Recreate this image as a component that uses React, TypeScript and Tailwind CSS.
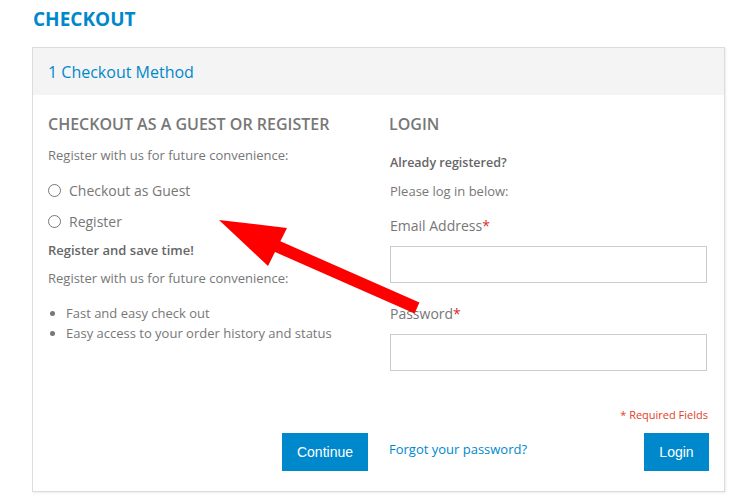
import React from "react";

const perks = ["Fast and easy check out", "Easy access to your order history and status"];

function Radio({ label }: { label: string }) {
  return (
    <label className="flex items-center gap-2 h-5 text-[14px] text-[#777]">
      <span className="h-[13px] w-[13px] rounded-full border border-[#777] bg-white" />
      {label}
    </label>
  );
}

export default function App() {
  return (
    <div className="relative min-h-[495px] w-[750px] bg-white font-['Open_Sans',sans-serif]">
      {/* page title */}
      <h1 className="pl-[33px] pt-[7px] h-[47px] text-[19px] leading-6 font-bold text-[#0088cc]">
        CHECKOUT
      </h1>

      {/* checkout panel */}
      <div className="ml-[32px] w-[693px] border border-[#dcdcdc] shadow-[1px_1px_2px_rgba(0,0,0,0.08)]">
        <div className="h-[47px] bg-[#f4f4f4] pl-[15px] flex items-center text-[16px] text-[#0088cc]">
          1 Checkout Method
        </div>

        <div className="px-[15px] pt-[19px] pb-[20px]">
          <div className="grid grid-cols-[322px_318px] gap-x-5">
            {/* guest / register */}
            <div>
              <h2 className="text-[16px] leading-5 font-semibold text-[#777]">
                CHECKOUT AS A GUEST OR REGISTER
              </h2>
              <p className="mt-[11px] text-[13px] leading-5 text-[#777]">
                Register with us for future convenience:
              </p>
              <div className="mt-[15px]">
                <Radio label="Checkout as Guest" />
              </div>
              <div className="mt-[11px]">
                <Radio label="Register" />
              </div>
              <p className="mt-[9px] text-[13px] leading-5 font-semibold text-[#666]">
                Register and save time!
              </p>
              <p className="mt-[8px] text-[13px] leading-5 text-[#777]">
                Register with us for future convenience:
              </p>
              <ul className="mt-[15px] text-[13px] leading-5 text-[#777]">
                {perks.map((p) => (
                  <li key={p} className="flex items-center">
                    <span className="ml-[2px] mr-[11px] h-[5px] w-[5px] rounded-full bg-[#777]" />
                    {p}
                  </li>
                ))}
              </ul>
            </div>

            {/* login */}
            <div>
              <h2 className="-ml-px text-[16px] leading-5 font-semibold text-[#777]">LOGIN</h2>
              <p className="mt-[19px] text-[12.5px] leading-5 font-semibold text-[#666]">
                Already registered?
              </p>
              <p className="mt-[8px] text-[13px] leading-5 text-[#777]">Please log in below:</p>
              <label className="block mt-[15px] text-[14px] leading-5 text-[#777]">
                Email Address<span className="text-[#e02b27]">*</span>
              </label>
              <input className="mt-[10px] block h-[37px] w-[317px] border border-[#ccc] outline-none" />
              <label className="block mt-[21px] text-[14px] leading-5 text-[#777]">
                Password<span className="text-[#e02b27]">*</span>
              </label>
              <input
                type="password"
                className="mt-[10px] block h-[37px] w-[317px] border border-[#ccc] outline-none"
              />
              <p className="mt-[36px] text-right text-[11px] leading-4 text-[#e3401f]">
                * Required Fields
              </p>
            </div>
          </div>

          {/* actions */}
          <div className="mt-[10px] grid grid-cols-[322px_319px] gap-x-5">
            <div className="flex justify-end pr-[2px]">
              <button className="h-[38px] w-[86px] bg-[#0088cc] text-white text-[14px] font-['Liberation_Sans',sans-serif]">
                Continue
              </button>
            </div>
            <div className="flex items-center justify-between">
              <a className="-ml-px -mt-[4px] text-[13px] text-[#0088cc]">Forgot your password?</a>
              <button className="h-[38px] w-[65px] bg-[#0088cc] text-white text-[14px] font-['Liberation_Sans',sans-serif]">
                Login
              </button>
            </div>
          </div>
        </div>
      </div>

      {/* red annotation arrow */}
      <svg className="absolute left-0 top-0 pointer-events-none" width="750" height="495">
        <line x1="274" y1="245" x2="417" y2="308" stroke="#ff0000" strokeWidth="12" />
        <polygon points="219,220 287,228 268,266" fill="#ff0000" />
      </svg>
    </div>
  );
}
